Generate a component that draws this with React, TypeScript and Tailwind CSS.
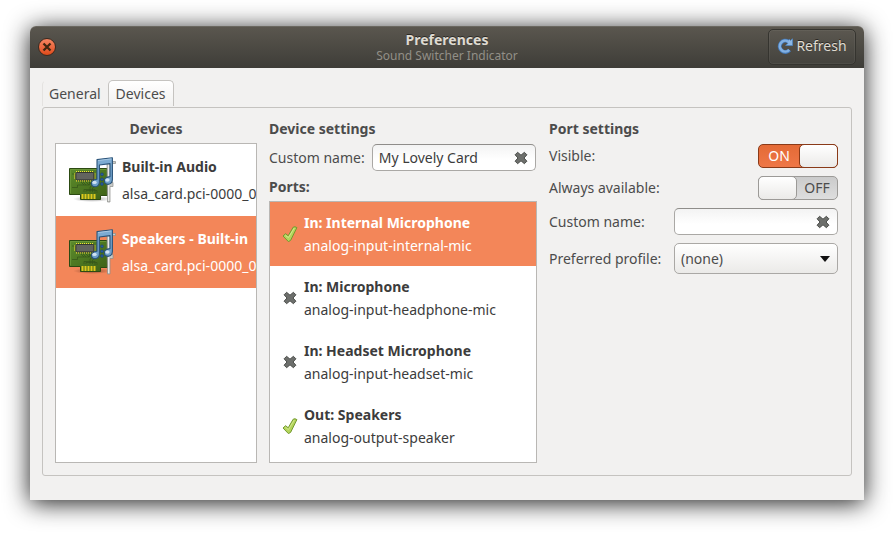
import { useId, useState } from "react";
import type { ReactNode } from "react";

type Port = { name: string; id: string; visible: boolean };

const DEVICES = [
  { name: "Built-in Audio", id: "alsa_card.pci-0000_0" },
  { name: "Speakers - Built-in", id: "alsa_card.pci-0000_0" },
];

const PORTS: Port[] = [
  { name: "In: Internal Microphone", id: "analog-input-internal-mic", visible: true },
  { name: "In: Microphone", id: "analog-input-headphone-mic", visible: false },
  { name: "In: Headset Microphone", id: "analog-input-headset-mic", visible: false },
  { name: "Out: Speakers", id: "analog-output-speaker", visible: true },
];

function CrossIcon() {
  return (
    <svg viewBox="0 0 14 14" className="block size-[14px]" aria-hidden="true">
      <path
        d="M3.6 1.3 7 4.2 10.4 1.3 12.9 3.8 10 7 12.9 10.2 10.4 12.7 7 9.8 3.6 12.7 1.1 10.2 4 7 1.1 3.8Z"
        fill="#6d6f6c"
        stroke="#4b4d4a"
        strokeWidth="1"
        strokeLinejoin="round"
      />
    </svg>
  );
}

function CheckIcon() {
  return (
    <svg viewBox="0 0 16 16" className="block size-4" aria-hidden="true">
      <path
        d="M1 10 3.6 7.7 6.2 9.8 11.2 1.2Q12.9.1 14.9 1.6L8.6 14.4 6.4 15.6Z"
        fill="#b3d55a"
        stroke="#73992f"
        strokeWidth="1"
        strokeLinejoin="round"
      />
      <path d="M3.5 9.4 6.4 11.6 12.2 2.2" fill="none" stroke="#d3e88e" strokeWidth="1" />
    </svg>
  );
}

function RefreshIcon() {
  return (
    <svg viewBox="0 0 16 16" className="block size-4" aria-hidden="true">
      <path
        d="M12.6 12A5.6 5.6 0 1 1 11.4 3.6"
        fill="none"
        stroke="#4478b5"
        strokeWidth="4"
      />
      <path
        d="M15.5.7V7.5H8.7L11 5.2 9.8 4 12.4 1.4 13.6 2.6Z"
        fill="#8db8e6"
        stroke="#4f86c4"
        strokeWidth=".8"
      />
      <path
        d="M12.2 11.8A5.4 5.4 0 1 1 11.4 3.8"
        fill="none"
        stroke="#82b0e2"
        strokeWidth="2.6"
      />
    </svg>
  );
}

function SoundCardIcon() {
  const id = useId();
  return (
    <svg viewBox="0 0 48 48" className="block size-12 shrink-0" aria-hidden="true">
      <defs>
        <linearGradient id={`${id}b`} x1="0" y1="0" x2="1" y2="1">
          <stop offset="0" stopColor="#5c8c2c" />
          <stop offset="1" stopColor="#3d6016" />
        </linearGradient>
        <radialGradient id={`${id}s`}>
          <stop offset="0" stopColor="#000" stopOpacity=".4" />
          <stop offset="1" stopColor="#000" stopOpacity="0" />
        </radialGradient>
        <linearGradient id={`${id}n`} x1="0" y1="0" x2="0" y2="1">
          <stop offset="0" stopColor="#7fadd3" />
          <stop offset="1" stopColor="#6b9dc8" />
        </linearGradient>
      </defs>
      <ellipse cx="24" cy="43" rx="19" ry="3" fill={`url(#${id}s)`} />
      <path
        d="M1.5 12.5H39.5V39.5H32.5V43.5H12.5V38.5H1.5Z"
        fill={`url(#${id}b)`}
        stroke="#2c4a12"
      />
      <path d="M2.5 37.5V13.5H38" fill="none" stroke="#6f9a3c" strokeWidth=".8" />
      <g fill="none" stroke="#34541a" strokeWidth=".7">
        <path d="M4 31.5H9.5V29H21.5V26M4 18H7M16 36V33.5H27V37M18 36V34.5H29V37M22 36V31L27 27M24.5 36V32L30 28M12 25 16 29M14 25 18 29M17 25 21 29M20 25 24 29" />
      </g>
      <path
        d="M14.5 38V43M17.5 38V43M20.5 38V43M23.5 38V43M26.5 38V43"
        stroke="#dcc81c"
        strokeWidth="2"
      />
      <path d="M8 15.7H26M8 24.7H26" stroke="#f2df36" strokeWidth="1.6" strokeDasharray="1 1" />
      <path d="M6.8 17.5V23M26.8 17.5V23" stroke="#f2df36" strokeWidth="1.6" strokeDasharray="1 1" />
      <rect x="7.9" y="16.5" width="18" height="7.4" rx="1" fill="#62645f" stroke="#343632" />
      <path d="M39 5.5H47.5V7.5H44V26.5H45V30.5H42V46H39.5Z" fill="#c9cbc8" stroke="#8c8e8a" strokeWidth=".7" />
      <path d="M40.7 8V45" stroke="#f0f0ee" />
      <g fill="#2a5da0" stroke="#173f78" strokeWidth=".6">
        <circle cx="34" cy="18.3" r="1.4" />
        <circle cx="34" cy="23.3" r="1.4" />
        <circle cx="34" cy="28" r="1.4" />
      </g>
      <path
        d="M29 3.6 44.4 1.8V23.6Q44.2 28 40 28.4 36.4 28.2 36.4 24.8 36.6 21.2 42 20.6V7.6L31.4 9V26Q31.2 30.4 27.2 30.8 23.3 30.6 23.4 27.2 23.7 23.8 29 23.2Z"
        fill={`url(#${id}n)`}
        stroke="#2a5379"
        strokeWidth="1.1"
        strokeLinejoin="round"
      />
      <path d="M30 4.5 43.6 2.8" stroke="#b5d0e8" strokeWidth=".8" />
      <ellipse cx="26.5" cy="26.4" rx="2.2" ry="1.7" fill="#cfe2f2" />
      <ellipse cx="39.4" cy="24" rx="2.2" ry="1.7" fill="#cfe2f2" />
    </svg>
  );
}

function Heading({ children, center = false }: { children: ReactNode; center?: boolean }) {
  return (
    <h2 className={`h-[17px] text-sm leading-[17px] font-bold ${center ? "text-center" : ""}`}>
      {children}
    </h2>
  );
}

function ClearableEntry({ id, initial = "" }: { id: string; initial?: string }) {
  const [value, setValue] = useState(initial);
  return (
    <div className="flex h-[27px] min-w-0 flex-1 items-center rounded-[5px] border border-[#aaa8a5] border-t-[#8f8d8a] bg-linear-to-b from-[#f3f3f3] to-white to-60% pr-[7px] pl-1.5">
      <input
        id={id}
        type="text"
        value={value}
        onChange={(e) => setValue(e.target.value)}
        className="h-full w-0 min-w-0 flex-1 bg-transparent text-sm text-[#3c3c3c] outline-none"
      />
      <button type="button" aria-label="Clear" onClick={() => setValue("")}>
        <CrossIcon />
      </button>
    </div>
  );
}

function Switch({ id, initial }: { id: string; initial: boolean }) {
  const [on, setOn] = useState(initial);
  return (
    <label
      className={`flex h-6 w-20 rounded-[5px] border text-sm leading-[22px] ${
        on
          ? "border-[#8a3a18] bg-linear-to-b from-[#e46a36] to-[#ef7747] text-white"
          : "flex-row-reverse border-[#9c9a97] bg-linear-to-b from-[#cbcbcb] to-[#dedede] text-[#4c4c4c]"
      }`}
    >
      <input
        id={id}
        type="checkbox"
        role="switch"
        checked={on}
        onChange={(e) => setOn(e.target.checked)}
        className="sr-only"
      />
      <span className="flex-1 text-center">{on ? "ON" : "OFF"}</span>
      <span
        className={`-my-px h-6 w-[39px] rounded-[5px] border bg-linear-to-b from-white to-[#ebeae8] ${
          on ? "-mr-px border-[#8a3a18]" : "-ml-px border-[#9c9a97]"
        }`}
      />
    </label>
  );
}

export default function App() {
  const [tab, setTab] = useState("Devices");
  const [device, setDevice] = useState(1);
  const [port, setPort] = useState(0);

  return (
    <div className="flex min-h-screen bg-white pt-[26px] pr-8 pb-9 pl-[30px] font-['Noto_Sans','Open_Sans',sans-serif] text-sm text-[#4c4c4c]">
      <main className="flex min-w-0 flex-1 flex-col rounded-t-[6px] bg-[#f2f1f0] shadow-[0_3px_24px_rgba(0,0,0,0.9)]">
        <header className="grid h-[42px] grid-cols-[1fr_auto_1fr] items-center rounded-t-[6px] bg-linear-to-b from-[#5b574f] to-[#3e3d38] px-2 inset-shadow-[0_1px_rgba(255,255,255,0.1)]">
          <button
            type="button"
            aria-label="Close"
            className="flex size-[18px] items-center justify-center rounded-full border border-[#3a2a20] bg-linear-to-b from-[#f58560] to-[#df4a16]"
          >
            <svg viewBox="0 0 10 10" className="size-[10px]" aria-hidden="true">
              <path d="M1.5 1.5 8.5 8.5M8.5 1.5 1.5 8.5" stroke="#40260f" strokeWidth="2.3" />
            </svg>
          </button>
          <div className="text-center">
            <h1 className="text-sm leading-[17px] font-bold text-[#dfdbd2] [text-shadow:0_-1px_rgba(0,0,0,0.5)]">
              Preferences
            </h1>
            <p className="text-xs leading-[15px] text-[#928f87]">Sound Switcher Indicator</p>
          </div>
          <button
            type="button"
            className="flex h-9 w-[88px] items-center justify-center gap-[3px] justify-self-end rounded-[5px] border border-[#35342f] bg-white/2 pb-0.5 text-[#dfdbd2] inset-shadow-[0_0_0_1px_rgba(255,255,255,0.05)] [text-shadow:0_-1px_rgba(0,0,0,0.5)]"
          >
            <RefreshIcon />
            Refresh
          </button>
        </header>

        <div className="flex flex-1 flex-col px-3 pt-3 pb-6">
          <div role="tablist" className="flex h-[27px]">
            {["General", "Devices"].map((name) => (
              <button
                key={name}
                type="button"
                role="tab"
                aria-selected={tab === name}
                onClick={() => setTab(name)}
                className={`h-[26px] rounded-t-[5px] border border-b-0 ${
                  tab === name
                    ? "border-[#c5c3c0] bg-linear-to-b from-white to-[#f2f1f0] px-[7px]"
                    : "border-transparent border-l-[#e4e2e0] px-1.5"
                }`}
              >
                {name}
              </button>
            ))}
          </div>

          <div
            role="tabpanel"
            className="grid flex-1 grid-cols-[202fr_268fr_290fr] gap-3 rounded-[3px] border border-[#c5c3c0] p-3"
          >
            <section className="flex min-w-0 flex-col gap-1.5">
              <Heading center>Devices</Heading>
              <ul className="flex-1 overflow-hidden border border-[#b9b7b4] bg-white">
                {DEVICES.map((d, i) => (
                  <li key={d.name}>
                    <button
                      type="button"
                      onClick={() => setDevice(i)}
                      className={`flex h-[72px] w-full items-center gap-1.5 overflow-hidden pl-3 text-left whitespace-nowrap ${
                        device === i ? "bg-[#f38659] text-white" : "text-[#3c3c3c]"
                      }`}
                    >
                      <SoundCardIcon />
                      <span className="flex flex-col leading-[27px]">
                        <b>{d.name}</b>
                        <span>{d.id}</span>
                      </span>
                    </button>
                  </li>
                ))}
              </ul>
            </section>

            <section className="flex min-w-0 flex-col gap-1.5">
              <Heading>Device settings</Heading>
              <div className="flex items-center gap-[7px] py-px pr-px">
                <label htmlFor="device-name">Custom name:</label>
                <ClearableEntry id="device-name" initial="My Lovely Card" />
              </div>
              <Heading>Ports:</Heading>
              <ul className="flex-1 border border-[#b9b7b4] bg-white">
                {PORTS.map((p, i) => (
                  <li key={p.id}>
                    <button
                      type="button"
                      onClick={() => setPort(i)}
                      className={`flex h-16 w-full items-center gap-1.5 pl-3 text-left whitespace-nowrap ${
                        port === i ? "bg-[#f38659] text-white" : "text-[#3c3c3c]"
                      }`}
                    >
                      <span className="flex w-4 justify-center">
                        {p.visible ? <CheckIcon /> : <CrossIcon />}
                      </span>
                      <span className="flex flex-col leading-[23px]">
                        <b>{p.name}</b>
                        <span>{p.id}</span>
                      </span>
                    </button>
                  </li>
                ))}
              </ul>
            </section>

            <section className="flex min-w-0 flex-col gap-[7px] pr-px">
              <Heading>Port settings</Heading>
              <div className="grid grid-cols-[118px_1fr] items-center gap-x-[7px] gap-y-2">
                <label htmlFor="visible">Visible:</label>
                <div className="flex justify-end">
                  <Switch id="visible" initial={true} />
                </div>
                <label htmlFor="always">Always available:</label>
                <div className="flex justify-end">
                  <Switch id="always" initial={false} />
                </div>
                <label htmlFor="port-name">Custom name:</label>
                <ClearableEntry id="port-name" />
                <label htmlFor="profile">Preferred profile:</label>
                <div className="relative">
                  <select
                    id="profile"
                    className="block h-[31px] w-full appearance-none rounded-[5px] border border-[#aaa8a5] bg-linear-to-b from-white to-[#ebeae8] px-1.5 text-sm"
                  >
                    <option>(none)</option>
                  </select>
                  <svg
                    viewBox="0 0 10 6"
                    className="pointer-events-none absolute top-[13px] right-2 h-1.5 w-2.5"
                    aria-hidden="true"
                  >
                    <path d="M0 0H10L5 6Z" fill="#111" />
                  </svg>
                </div>
              </div>
            </section>
          </div>
        </div>
      </main>
    </div>
  );
}
